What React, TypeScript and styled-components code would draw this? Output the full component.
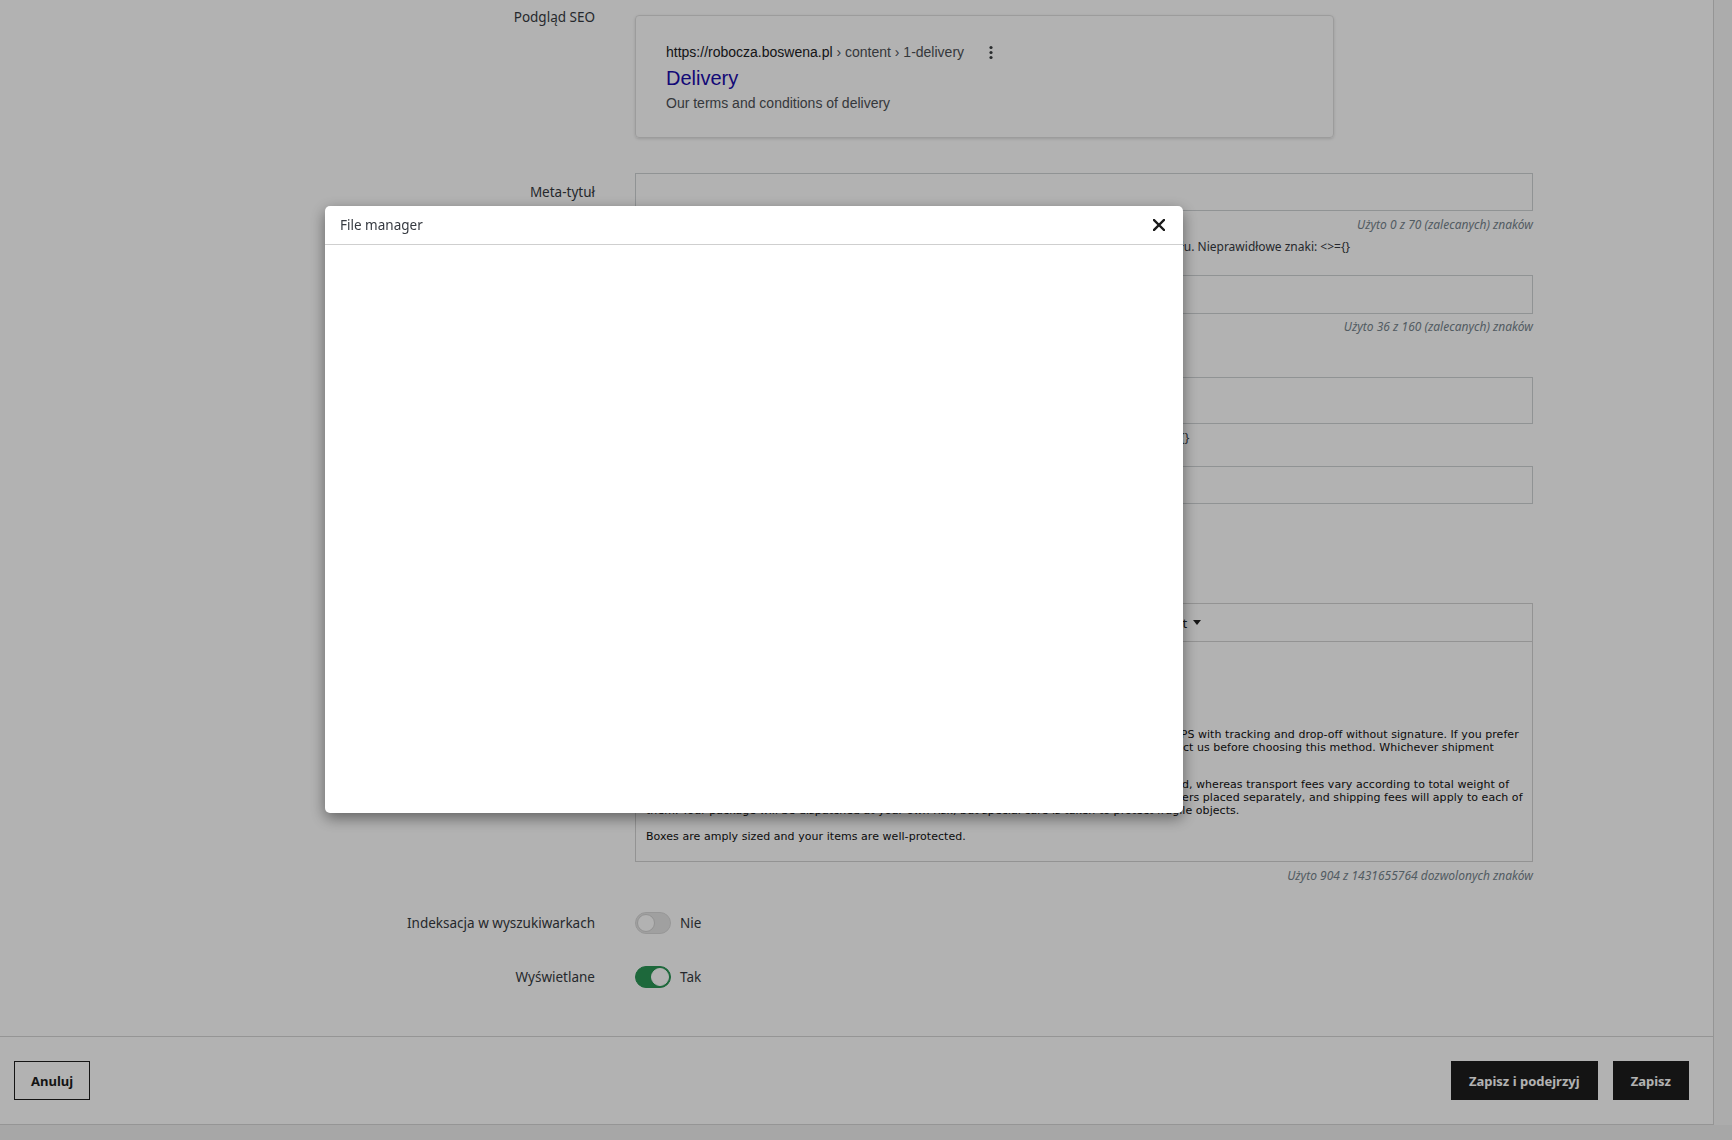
import React from 'react';
import styled, { createGlobalStyle } from 'styled-components';
import {
  Bold,
  Italic,
  Underline,
  Strikethrough,
  AlignLeft,
  AlignCenter,
  AlignRight,
  AlignJustify,
  List,
  ListOrdered,
  Link,
  Image,
  Table,
  Code,
  Undo2,
  Redo2,
} from 'lucide-react';

const GlobalStyle = createGlobalStyle`
  html, body {
    margin: 0;
    height: 1140px;
    overflow: hidden;
    background: #f0f0f0;
    font-family: "Noto Sans", "Open Sans", sans-serif;
    color: #363a41;
  }
  * { box-sizing: border-box; }
`;

const Page = styled.div`
  display: flex;
  height: 1140px;
  align-items: flex-start;
`;

const Panel = styled.div`
  width: 1714px;
  height: 1125px;
  background: #fff;
  border-right: 1px solid #d6d6d6;
  border-bottom: 1px solid #d6d6d6;
  display: flex;
  flex-direction: column;
`;

const ScrollStrip = styled.div`
  flex: 1;
  height: 1125px;
  background: #f7f7f7;
`;

const Form = styled.div`
  flex: 1;
  padding-top: 8px;
`;

const Row = styled.div<{ $mt?: number }>`
  display: grid;
  grid-template-columns: 595px 898px;
  column-gap: 40px;
  margin-top: ${(p) => p.$mt ?? 0}px;
`;

const Label = styled.div<{ $lh: number }>`
  text-align: right;
  font-size: 13.5px;
  line-height: ${(p) => p.$lh}px;
  color: #363a41;
`;

const Field = styled.div`
  display: flex;
  flex-direction: column;
`;

const SeoCard = styled.div`
  width: 699px;
  margin-top: 7px;
  border: 1px solid #e0e0e0;
  border-radius: 4px;
  box-shadow: 0 1px 3px rgba(0, 0, 0, 0.14);
  padding: 26px 30px 24px;
  font-family: "Liberation Sans", Arial, sans-serif;
`;

const SeoUrl = styled.div`
  display: flex;
  align-items: center;
  font-size: 14px;
  line-height: 20px;
  color: #202124;
`;

const Crumbs = styled.span`
  color: #4d5156;
`;

const Kebab = styled.svg`
  margin-left: 25px;
`;

const SeoTitle = styled.div`
  margin-top: 3px;
  font-size: 20px;
  line-height: 26px;
  color: #1a0dab;
`;

const SeoDesc = styled.div`
  margin-top: 2px;
  font-size: 14px;
  line-height: 20px;
  color: #4d5156;
`;

const Input = styled.div<{ $h: number }>`
  height: ${(p) => p.$h}px;
  border: 1px solid #cfd3d5;
  background: #fff;
`;

const Hint = styled.div<{ $mt: number }>`
  margin-top: ${(p) => p.$mt}px;
  text-align: right;
  font-size: 12px;
  line-height: 16px;
  font-style: italic;
  color: #76848d;
`;

const Help = styled.div<{ $mt: number }>`
  margin-top: ${(p) => p.$mt}px;
  font-size: 12px;
  line-height: 16px;
  color: #363a41;
`;

const Editor = styled.div`
  height: 259px;
  border: 1px solid #d3d3d3;
  display: flex;
  flex-direction: column;
`;

const Toolbar = styled.div`
  height: 38px;
  border-bottom: 1px solid #d3d3d3;
  display: flex;
  align-items: center;
  padding-left: 4px;
`;

const ToolButton = styled.span`
  width: 28px;
  height: 28px;
  display: inline-flex;
  align-items: center;
  justify-content: center;
  color: #222;
`;

const Separator = styled.span`
  width: 1px;
  height: 22px;
  margin: 0 8px;
  background: #d3d3d3;
`;

const MenuButton = styled.span`
  display: inline-flex;
  align-items: center;
  font-size: 13px;
  color: #222;
  margin-left: 4px;
`;

const Caret = styled.span`
  width: 0;
  height: 0;
  margin-left: 6px;
  border-left: 4px solid transparent;
  border-right: 4px solid transparent;
  border-top: 5px solid #222;
`;

const Content = styled.div`
  flex: 1;
  overflow: hidden;
  padding: 10px 10px 0;
  font-family: "DejaVu Sans", Verdana, sans-serif;
  font-size: 11px;
  letter-spacing: 0.05px;
  color: #111;

  h2 {
    margin: 8px 0 12px;
    font-size: 16px;
    line-height: 20px;
  }
  h3 {
    margin: 0 0 18px;
    font-size: 13px;
    line-height: 18px;
  }
  p {
    margin: 0 0 13px;
    line-height: 13px;
    white-space: nowrap;
  }
  p:first-of-type {
    margin-bottom: 11px;
  }
`;

const ToggleRow = styled.div`
  display: flex;
  align-items: center;
  height: 22px;
  font-size: 13.5px;
`;

const Track = styled.span<{ $on: boolean }>`
  position: relative;
  width: 36px;
  height: 22px;
  border-radius: 11px;
  background: ${(p) => (p.$on ? '#2a9555' : '#e6e6e6')};
  border: 1px solid ${(p) => (p.$on ? '#2a9555' : '#d9d9d9')};
  margin-right: 9px;
`;

const Knob = styled.span<{ $on: boolean }>`
  position: absolute;
  top: 1px;
  left: ${(p) => (p.$on ? '15px' : '1px')};
  width: 18px;
  height: 18px;
  border-radius: 50%;
  background: #fff;
  border: 1px solid ${(p) => (p.$on ? '#fff' : '#d2d2d2')};
`;

const Footer = styled.div`
  height: 88px;
  border-top: 1px solid #d6d6d6;
  display: flex;
  align-items: center;
  justify-content: space-between;
  padding: 0 24px 0 14px;
`;

const Actions = styled.div`
  display: flex;
  gap: 15px;
`;

const Button = styled.button<{ $dark?: boolean }>`
  height: 39px;
  padding: 0 ${(p) => (p.$dark ? 17 : 16)}px;
  font-family: "Noto Sans", sans-serif;
  font-size: 13px;
  font-weight: 700;
  border: 1px solid #1d1d1d;
  background: ${(p) => (p.$dark ? '#1d1d1d' : '#fff')};
  color: ${(p) => (p.$dark ? '#fff' : '#1d1d1d')};
  border-radius: 0;
`;

const Overlay = styled.div`
  position: fixed;
  inset: 0;
  background: rgba(0, 0, 0, 0.3);
`;

const Modal = styled.div`
  position: fixed;
  left: 325px;
  top: 206px;
  width: 858px;
  height: 607px;
  background: #fff;
  border-radius: 5px;
  box-shadow: 0 5px 15px rgba(0, 0, 0, 0.45);
  display: flex;
  flex-direction: column;
`;

const ModalHeader = styled.div`
  height: 39px;
  border-bottom: 1px solid #cfcfcf;
  display: flex;
  align-items: center;
  justify-content: space-between;
  padding: 0 18px 0 15px;
  font-size: 13.5px;
  color: #363a41;
`;

const CloseButton = styled.span`
  display: inline-flex;
  color: #1a1a1a;
`;

const ModalBody = styled.div`
  flex: 1;
`;

const toolIcons = [
  Undo2, Redo2, Bold, Italic, Underline, Strikethrough, AlignLeft, AlignCenter,
  AlignRight, AlignJustify, List, ListOrdered, Link, Image, Table, Code,
];

export default function App() {
  return (
    <>
      <GlobalStyle />
      <Page>
        <Panel>
          <Form>
            <Row>
              <Label $lh={18}>Podgląd SEO</Label>
              <Field>
                <SeoCard>
                  <SeoUrl>
                    https://robocza.boswena.pl<Crumbs>&nbsp;› content › 1-delivery</Crumbs>
                    <Kebab width="4" height="15" viewBox="0 0 4 15">
                      <circle cx="2" cy="2.5" r="1.6" fill="#3c4043" />
                      <circle cx="2" cy="7.5" r="1.6" fill="#3c4043" />
                      <circle cx="2" cy="12.5" r="1.6" fill="#3c4043" />
                    </Kebab>
                  </SeoUrl>
                  <SeoTitle>Delivery</SeoTitle>
                  <SeoDesc>Our terms and conditions of delivery</SeoDesc>
                </SeoCard>
              </Field>
            </Row>

            <Row $mt={35}>
              <Label $lh={38}>Meta-tytuł</Label>
              <Field>
                <Input $h={38} />
                <Hint $mt={6}>Użyto 0 z 70 (zalecanych) znaków</Hint>
                <Help $mt={6}>
                  Tytuł wyświetlany w wynikach wyszukiwania. Jeżeli pole zostanie puste, użyta zostanie nazwa tytułu. Nieprawidłowe znaki: &lt;&gt;={'{}'}
                </Help>
              </Field>
            </Row>

            <Row $mt={20}>
              <Label $lh={39}>Meta-opis</Label>
              <Field>
                <Input $h={39} />
                <Hint $mt={5}>Użyto 36 z 160 (zalecanych) znaków</Hint>
                <Help $mt={4}>Nieprawidłowe znaki: &lt;&gt;={'{}'}</Help>
              </Field>
            </Row>

            <Row $mt={22}>
              <Label $lh={47}>Meta-słowa kluczowe</Label>
              <Field>
                <Input $h={47} />
                <Help $mt={6}>
                  Aby dodać słowo kluczowe, wpisz je i naciśnij Enter po każdym z nich. Nieprawidłowe znaki: &lt;&gt;;=#{'{}'}
                </Help>
              </Field>
            </Row>

            <Row $mt={20}>
              <Label $lh={38}>Przyjazny URL</Label>
              <Field>
                <Input $h={38} />
                <Help $mt={6}>Tylko litery i myślnik (-)</Help>
              </Field>
            </Row>

            <Row $mt={77}>
              <Label $lh={38}>Zawartość strony</Label>
              <Field>
                <Editor>
                  <Toolbar>
                    {toolIcons.slice(0, 2).map((Icon, i) => (
                      <ToolButton key={`a${i}`}>
                        <Icon size={15} />
                      </ToolButton>
                    ))}
                    <Separator />
                    {toolIcons.slice(2, 10).map((Icon, i) => (
                      <ToolButton key={`b${i}`}>
                        <Icon size={15} />
                      </ToolButton>
                    ))}
                    <Separator />
                    {toolIcons.slice(10).map((Icon, i) => (
                      <ToolButton key={`c${i}`}>
                        <Icon size={15} />
                      </ToolButton>
                    ))}
                    <Separator />
                    <MenuButton>
                      Format
                      <Caret />
                    </MenuButton>
                  </Toolbar>
                  <Content>
                    <h2>Shipments and returns</h2>
                    <h3>Your pack shipment</h3>
                    <p>
                      Packages are generally dispatched within 2 days after receipt of payment and are shipped via UPS with tracking and drop-off without signature. If you prefer
                      <br />
                      delivery by UPS Extra with required signature, an additional cost will be applied, so please contact us before choosing this method. Whichever shipment
                      <br />
                      choice you make, we will provide you with a link to track your package online.
                    </p>
                    <p>
                      Shipping fees include handling and packing fees as well as postage costs. Handling fees are fixed, whereas transport fees vary according to total weight of
                      <br />
                      the shipment. We advise you to group your items in one order. We cannot group two distinct orders placed separately, and shipping fees will apply to each of
                      <br />
                      them. Your package will be dispatched at your own risk, but special care is taken to protect fragile objects.
                    </p>
                    <p>Boxes are amply sized and your items are well-protected.</p>
                  </Content>
                </Editor>
                <Hint $mt={6}>Użyto 904 z 1431655764 dozwolonych znaków</Hint>
              </Field>
            </Row>

            <Row $mt={28}>
              <Label $lh={22}>Indeksacja w wyszukiwarkach</Label>
              <ToggleRow>
                <Track $on={false}>
                  <Knob $on={false} />
                </Track>
                Nie
              </ToggleRow>
            </Row>

            <Row $mt={32}>
              <Label $lh={22}>Wyświetlane</Label>
              <ToggleRow>
                <Track $on>
                  <Knob $on />
                </Track>
                Tak
              </ToggleRow>
            </Row>
          </Form>

          <Footer>
            <Button>Anuluj</Button>
            <Actions>
              <Button $dark>Zapisz i podejrzyj</Button>
              <Button $dark>Zapisz</Button>
            </Actions>
          </Footer>
        </Panel>
        <ScrollStrip />
      </Page>

      <Overlay />
      <Modal>
        <ModalHeader>
          File manager
          <CloseButton>
            <svg width="12" height="12" viewBox="0 0 12 12">
              <path d="M1 1L11 11M11 1L1 11" stroke="currentColor" strokeWidth="2.4" strokeLinecap="square" />
            </svg>
          </CloseButton>
        </ModalHeader>
        <ModalBody />
      </Modal>
    </>
  );
}
